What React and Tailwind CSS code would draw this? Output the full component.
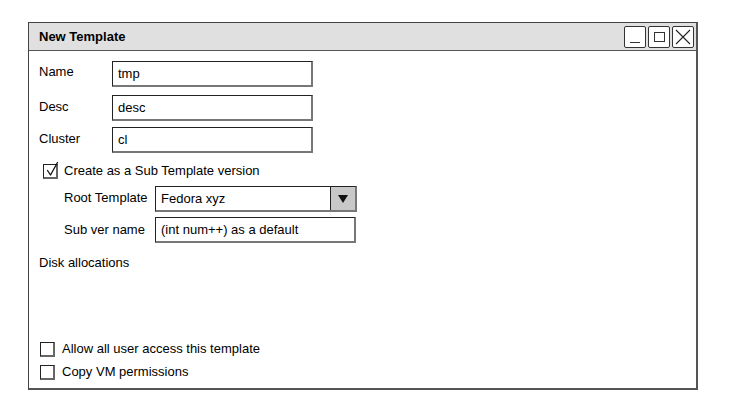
import React from 'react';

const font = { fontFamily: '"Liberation Sans", Arial, sans-serif' };

const Field = ({ value, className = '' }) => (
  <div
    className={`h-[26px] bg-white border border-[#222] border-r-2 border-b-2 border-r-[#777] border-b-[#777] flex items-center px-[5px] text-[13px] text-black ${className}`}
  >
    {value}
  </div>
);

const Check = ({ checked }) => (
  <div className="relative w-[15px] h-[15px] border border-[#222] border-r-2 border-b-2 border-r-[#666] border-b-[#666] bg-white shrink-0">
    {checked && (
      <svg
        className="absolute -top-[4px] left-[1px]"
        width="16"
        height="17"
        viewBox="0 0 16 17"
        fill="none"
        stroke="#111"
        strokeWidth="1.3"
        strokeLinecap="round"
        strokeLinejoin="round"
      >
        <path d="M2.5 9.5 L5.5 14 L12.5 1.5" />
      </svg>
    )}
  </div>
);

const WinButton = ({ children }) => (
  <div className="w-[22px] h-[22px] border border-[#333] rounded-[2px] bg-white flex items-center justify-center">
    {children}
  </div>
);

export default function App() {
  return (
    <div className="w-[731px] h-[414px] bg-white pt-[22px] pl-[28px]" style={font}>
      <div className="w-[670px] h-[368px] border border-[#444] border-r-2 border-b-2 border-r-[#555] border-b-[#555] bg-white flex flex-col">
        {/* Title bar */}
        <div className="h-[28px] bg-[#e0e0e0] border-b border-[#555] flex items-center justify-between pl-[10px] pr-[2px]">
          <span className="text-[13px] font-bold text-black">New Template</span>
          <div className="flex items-center gap-[2px]">
            <WinButton>
              <div className="w-[10px] h-[1px] bg-[#333] mt-[12px]" />
            </WinButton>
            <WinButton>
              <div className="w-[11px] h-[10px] border border-[#333]" />
            </WinButton>
            <WinButton>
              <svg width="16" height="16" viewBox="0 0 16 16" stroke="#222" strokeWidth="1.1">
                <path d="M1 1 L15 15 M15 1 L1 15" />
              </svg>
            </WinButton>
          </div>
        </div>

        {/* Body */}
        <div className="flex-1 flex flex-col px-[10px] pt-[10px] pb-[8px] text-[13px] leading-[16px] text-black">
          <div className="flex items-start">
            <span className="w-[73px] pt-[3px]">Name</span>
            <Field value="tmp" className="w-[201px]" />
          </div>
          <div className="flex items-start mt-[8px]">
            <span className="w-[73px] pt-[4px]">Desc</span>
            <Field value="desc" className="w-[201px] h-[25px]" />
          </div>
          <div className="flex items-start mt-[6px]">
            <span className="w-[73px] pt-[4px]">Cluster</span>
            <Field value="cl" className="w-[201px]" />
          </div>

          <div className="flex items-center gap-[6px] mt-[10px] pl-[4px]">
            <Check checked />
            <span>Create as a Sub Template version</span>
          </div>

          <div className="flex items-center mt-[7px] pl-[25px]">
            <span className="w-[91px] -mt-[3px]">Root Template</span>
            <div className="w-[202px] h-[26px] flex border border-[#222] border-r-2 border-b-2 border-r-[#777] border-b-[#777]">
              <div className="flex-1 flex items-center px-[5px]">Fedora xyz</div>
              <div className="w-[25px] bg-[#c8c8c8] border-l border-[#222] flex items-center justify-center">
                <svg width="10" height="8" viewBox="0 0 10 8">
                  <path d="M0 0 H10 L5 8 Z" fill="#111" />
                </svg>
              </div>
            </div>
          </div>

          <div className="flex items-center mt-[5px] pl-[25px]">
            <span className="w-[91px]">Sub ver name</span>
            <Field value="(int num++) as a default" className="w-[201px] h-[25px]" />
          </div>

          <div className="mt-[12px]">Disk allocations</div>

          <div className="flex-1" />

          <div className="flex items-center gap-[7px] pl-[1px]">
            <Check />
            <span>Allow all user access this template</span>
          </div>
          <div className="flex items-center gap-[7px] pl-[1px] mt-[7px]">
            <Check />
            <span>Copy VM permissions</span>
          </div>
        </div>
      </div>
    </div>
  );
}
